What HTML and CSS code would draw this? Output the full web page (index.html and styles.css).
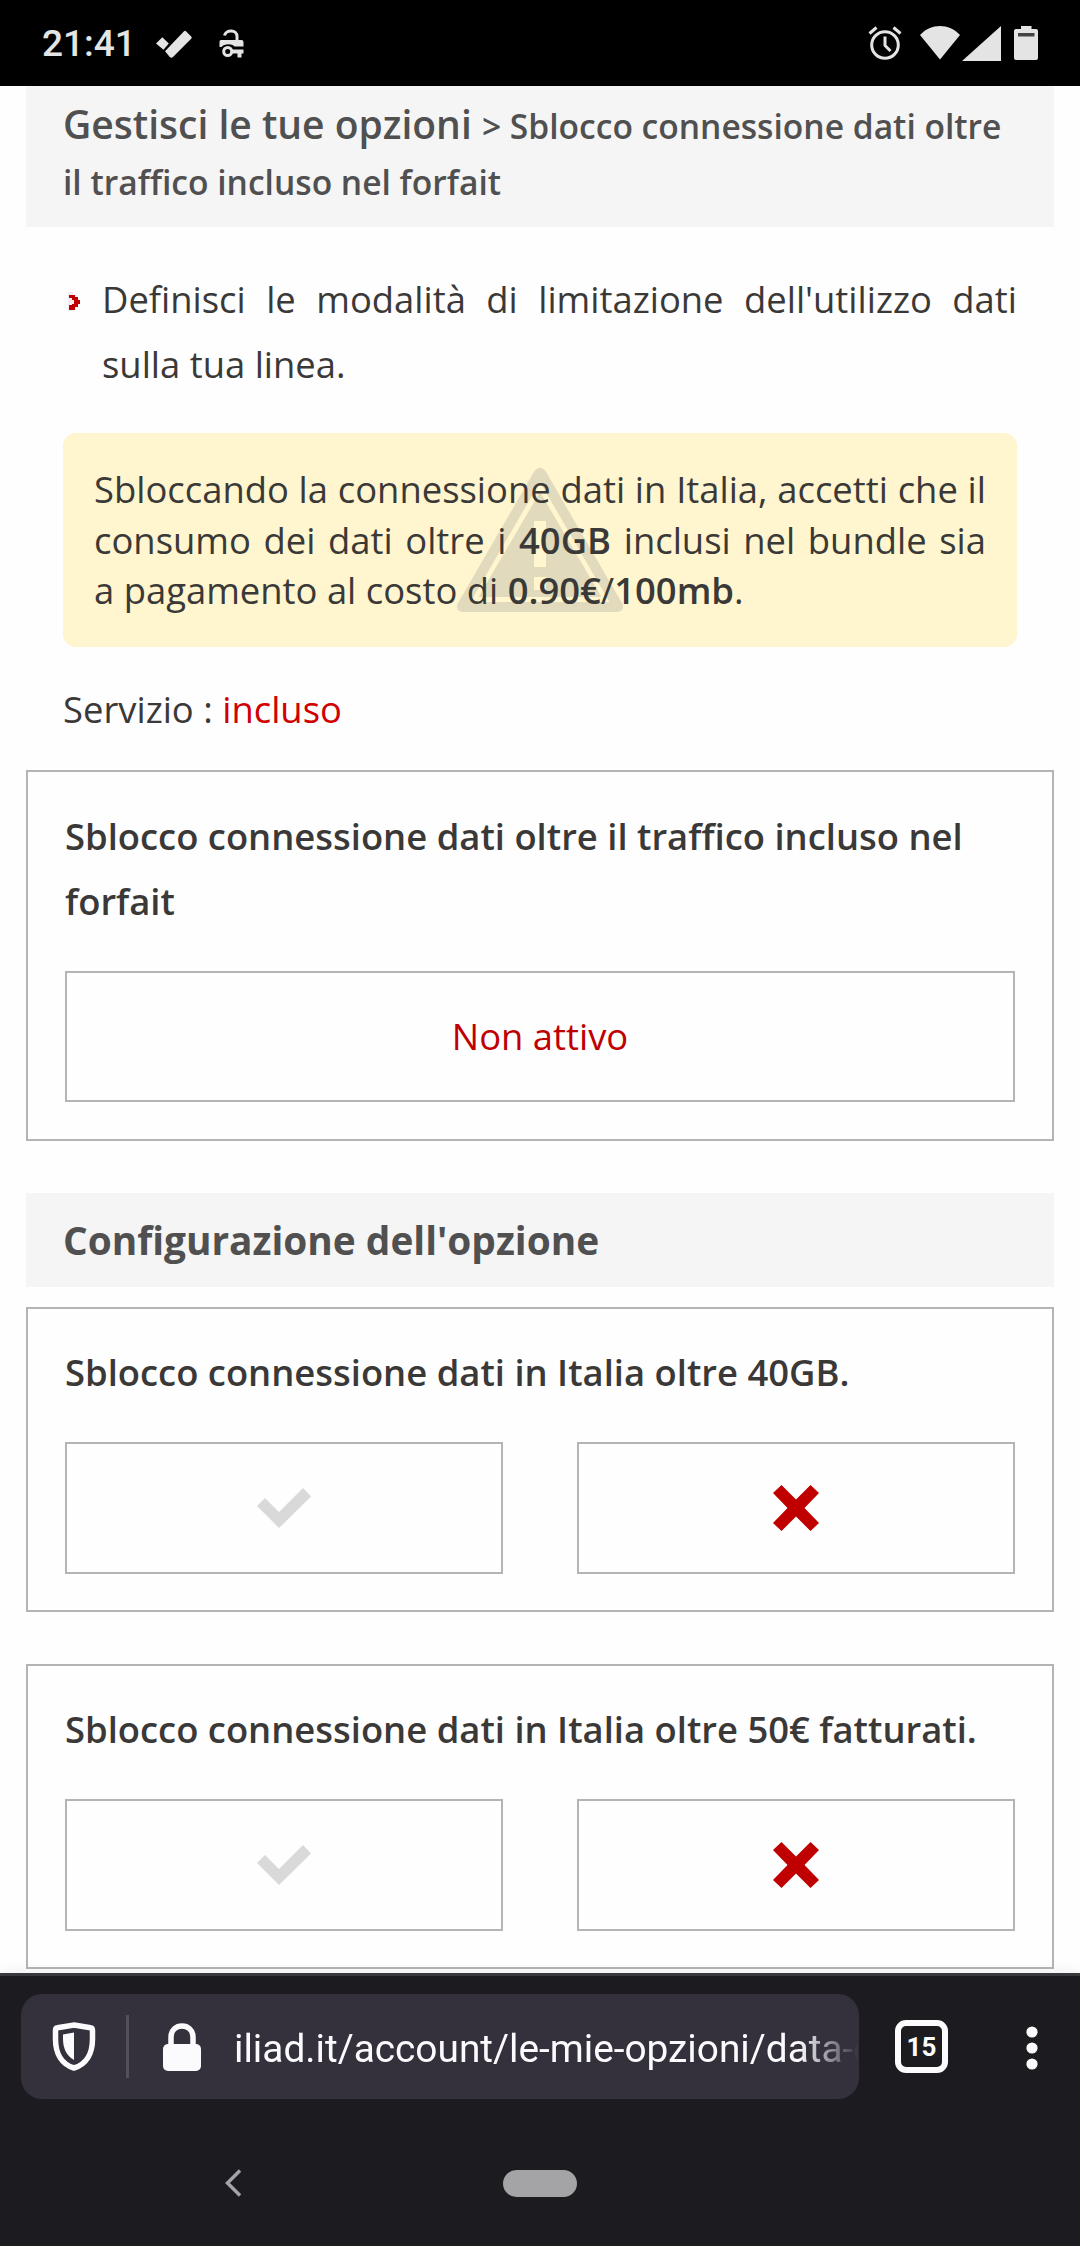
FILE: index.html
```html
<!DOCTYPE html>
<html lang="it">
<head>
    <meta charset="UTF-8">
    <meta name="viewport" content="width=device-width, initial-scale=1.0">
    <title>Gestisci le tue opzioni</title>
    <link rel="stylesheet" href="styles.css">
</head>
<body>
    <header class="status-bar">
        <span class="time">21:41</span>
        <svg class="task-icon" width="36" height="28" viewBox="0 0 36 28">
            <path d="M0 13.5 6.3 7.2 12.8 13.5 7.5 19.8zM9 21.3 28 1.2Q29 .2 30 1.2L35.2 6.4Q36.2 7.6 35.2 8.8L17 27Q15.4 28.4 13.8 27z"/>
        </svg>
        <svg class="vpn-icon" width="25" height="29" viewBox="0 0 25 29">
            <path class="line" d="M5.5 6.5C7 .2 18 .2 18 7.5V12"/>
            <path d="M2 11H22.5Q24.5 11 24.5 13V17.5H15.5C13 14.5 5 14.5 2.5 18H.5V13Q.5 11 2 11z"/>
            <circle class="line" cx="8.7" cy="22.5" r="4"/>
            <path d="M13 20.5H24.5V24.5H22.5V28.5H18.5V24.5H13z"/>
        </svg>
        <svg class="alarm-icon" width="34" height="36" viewBox="0 0 34 36">
            <circle class="line" cx="17" cy="20" r="13.3"/>
            <path class="line" d="M1.5 8.5 8.5 2.5M32.5 8.5 25.5 2.5M17 11.5V20.5L22.5 26"/>
        </svg>
        <svg class="wifi-icon" width="40" height="34" viewBox="0 0 40 34">
            <path d="M0 9C11-3 29-3 40 9L20 33.5z"/>
        </svg>
        <svg class="signal-icon" width="39" height="35" viewBox="0 0 39 35">
            <path d="M0 35 39 0V35z"/>
        </svg>
        <svg class="battery-icon" width="24" height="34" viewBox="0 0 24 34">
            <path d="M7 0H17.5V3H22Q24 3 24 5V32Q24 34 22 34H2Q0 34 0 32V5Q0 3 2 3H7z"/>
            <path class="level" d="M4 7H20.5V10.5H4z"/>
        </svg>
    </header>

    <main class="page">
        <h1 class="title breadcrumb">Gestisci le tue opzioni <small>&gt; Sblocco connessione dati oltre il traffico incluso nel forfait</small></h1>

        <div class="intro">
            <svg class="bullet" width="13" height="19" viewBox="0 0 13 19">
                <path class="halo" d="M0 0H5V3H8V6H11V13H8V16H5V19H0z"/>
                <path d="M1 3H7V5H10V8H12V12H10V15H7V18H1V13H4V12H6V8H4V6H1z"/>
            </svg>
            <p>Definisci le modalità di limitazione dell'utilizzo dati sulla tua linea.</p>
        </div>

        <div class="warning">
            <svg class="warning-icon" width="167" height="146" viewBox="0 0 167 146">
                <path fill-rule="evenodd" d="M78 4Q83.5-3 89 4L166 137Q168 144 161 145H6Q-1 144 1 137zM83.5 15 14 135H153z"/>
                <path fill-rule="evenodd" d="M83.5 25 145 130H22zM77.5 54V100H89.5V54zM77.5 110V123H89.5V110z"/>
            </svg>
            <p>Sbloccando la connessione dati in Italia, accetti che il consumo dei dati oltre i <b>40GB</b> inclusi nel bundle sia a pagamento al costo di <b>0.90€</b>/<b>100mb</b>.</p>
        </div>

        <p class="service">Servizio : <span class="included">incluso</span></p>

        <section class="card status">
            <h3>Sblocco connessione dati oltre il traffico incluso nel forfait</h3>
            <div class="buttons">
                <a class="button">Non attivo</a>
            </div>
        </section>

        <h2 class="title">Configurazione dell'opzione</h2>

        <section class="card">
            <h3>Sblocco connessione dati in Italia oltre 40GB.</h3>
            <div class="buttons">
                <a class="button">
                    <svg class="yes" width="54" height="40" viewBox="0 0 54 40"><path d="M0 18 8 10 22 24 46 0 54 8.5 22 40z"/></svg>
                </a>
                <a class="button">
                    <svg class="no" width="46" height="46" viewBox="0 0 46 46"><path d="M0 8 8.5 0 23 14.5 37.5 0 46 8 31.5 23 46 38 37.5 46 23 31.5 8.5 46 0 38 14.5 23z"/></svg>
                </a>
            </div>
        </section>

        <section class="card">
            <h3>Sblocco connessione dati in Italia oltre 50€ fatturati.</h3>
            <div class="buttons">
                <a class="button">
                    <svg class="yes" width="54" height="40" viewBox="0 0 54 40"><path d="M0 18 8 10 22 24 46 0 54 8.5 22 40z"/></svg>
                </a>
                <a class="button">
                    <svg class="no" width="46" height="46" viewBox="0 0 46 46"><path d="M0 8 8.5 0 23 14.5 37.5 0 46 8 31.5 23 46 38 37.5 46 23 31.5 8.5 46 0 38 14.5 23z"/></svg>
                </a>
            </div>
        </section>
    </main>

    <footer class="browser">
        <div class="toolbar">
            <div class="address">
                <svg class="shield-icon" width="44" height="49" viewBox="0 0 44 49">
                    <path class="line" d="M22 3 38.5 5.8Q40.5 6 40.5 8.5V17C40.5 32 34 42.5 22 46 10 42.5 3.5 32 3.5 17V8.5Q3.5 6 5.5 5.8z"/>
                    <path d="M22 10.5V38C14.5 34 11 26 11 17V12.5z"/>
                </svg>
                <span class="divider"></span>
                <svg class="lock-icon" width="38" height="49" viewBox="0 0 38 49">
                    <rect x="0" y="22" width="38" height="27" rx="5"/>
                    <path class="line" d="M8 23V15C8 .2 30 .2 30 15V23"/>
                </svg>
                <span class="url">iliad.it/account/le-mie-opzioni/data-c</span>
            </div>
            <span class="tabs">15</span>
            <svg class="menu-icon" width="12" height="44" viewBox="0 0 12 44">
                <circle cx="6" cy="6" r="5.6"/>
                <circle cx="6" cy="22" r="5.6"/>
                <circle cx="6" cy="38" r="5.6"/>
            </svg>
        </div>
        <nav class="navigation">
            <svg class="back-icon" width="17" height="28" viewBox="0 0 17 28">
                <path d="M15 1.5 2.5 14 15 26.5"/>
            </svg>
            <span class="home"></span>
        </nav>
    </footer>
</body>
</html>
```
FILE: styles.css
```css
* {
    box-sizing: border-box;
}

body {
    display: flex;
    flex-direction: column;
    height: 2246px;
    margin: 0;
    overflow: hidden;
    background-color: #fefefe;
    font-family: "Open Sans", "Noto Sans", sans-serif;
    font-size: 36.4px;
    line-height: 65px;
    color: #3a3938;
}

h1, h2, h3, p {
    margin: 0;
}

svg {
    flex: none;
    display: block;
}

.line {
    fill: none;
}

/* status bar */
.status-bar {
    display: flex;
    flex: none;
    align-items: center;
    height: 86px;
    padding: 0 42px;
    background-color: #000;
    color: #e4e4e4;
    fill: #e4e4e4;
    stroke-width: 3;
    font-family: Roboto, sans-serif;
}

.status-bar .line {
    stroke: #e4e4e4;
}

.time {
    width: 114px;
    padding-top: 1px;
    font-size: 37px;
    font-weight: 500;
    white-space: nowrap;
}

.task-icon {
    margin-top: 2px;
}

.vpn-icon {
    margin-left: 27px;
}

.alarm-icon {
    margin-left: auto;
}

.wifi-icon {
    margin-left: 18px;
}

.signal-icon {
    margin-left: 2px;
}

.battery-icon {
    margin-left: 13px;
}

.battery-icon .level {
    fill: #454545;
}

/* page */
.page {
    flex: 1;
    min-height: 0;
    padding: 0 26px;
    overflow: hidden;
}

.title {
    padding: 19px 37px;
    background-color: #f5f5f5;
    color: #505050;
    font-size: 38.8px;
    font-weight: 700;
    line-height: 56px;
}

.breadcrumb {
    height: 141px;
    padding-top: 11px;
    font-size: 39px;
    font-weight: 600;
    line-height: 54px;
}

.breadcrumb small {
    font-size: 33.6px;
}

.intro {
    display: flex;
    align-items: flex-start;
    margin: 40px 37px 36px;
    text-align: justify;
}

.bullet {
    margin: 25px 21px 0 5px;
    fill: #c00000;
}

.bullet .halo {
    fill: #f5eded;
}

.warning {
    position: relative;
    height: 214px;
    margin: 0 37px;
    padding: 31px;
    border-radius: 13px;
    background-color: #fff5ce;
    line-height: 50.7px;
    text-align: justify;
}

.warning p {
    position: relative;
}

.warning b {
    font-weight: 600;
}

.warning-icon {
    position: absolute;
    top: 34px;
    left: 50%;
    transform: translateX(-50%);
    fill: #e1dabc;
}

.service {
    margin: 30px 37px 28px;
}

.included {
    color: #d00000;
}

.card {
    margin-bottom: 52px;
    padding: 31px 37px 36px;
    border: 2px solid #b4b4b4;
}

.card h3 {
    font-size: 36.4px;
    font-weight: 600;
}

.title + .card {
    margin-top: 20px;
}

.buttons {
    display: flex;
    gap: 74px;
    margin-top: 37px;
}

.button {
    display: flex;
    flex: 1;
    align-items: center;
    justify-content: center;
    height: 132px;
    border: 2px solid #b4b4b4;
    color: #c00000;
}

.status {
    padding: 32px 37px 37px;
}

.status .button {
    height: 131px;
}

.yes {
    fill: #d9d9d9;
}

.no {
    fill: #c00000;
}

/* browser toolbar */
.browser {
    flex: none;
    height: 273px;
    padding-top: 18px;
    border-top: 3px solid #38373c;
    background-color: #1c1b20;
    box-shadow: 0 0 14px rgba(0, 0, 0, 0.08);
    color: #fbfbfe;
    fill: #fbfbfe;
    font-family: Roboto, sans-serif;
}

.toolbar {
    display: flex;
    align-items: center;
    height: 105px;
    padding: 0 42px 0 21px;
}

.browser .line {
    stroke: #fbfbfe;
    stroke-width: 5.5;
}

.address {
    display: flex;
    align-items: center;
    width: 838px;
    height: 105px;
    padding-left: 31px;
    border-radius: 21px;
    background-color: #34313c;
    overflow: hidden;
}

.divider {
    flex: none;
    width: 3px;
    height: 63px;
    margin: 0 34px 0 30px;
    background-color: #53505c;
}

.url {
    flex: 1;
    margin-left: 33px;
    padding-top: 4px;
    overflow: hidden;
    font-size: 38.8px;
    white-space: nowrap;
    -webkit-mask-image: linear-gradient(to left, transparent, #000 60px);
    mask-image: linear-gradient(to left, transparent, #000 60px);
}

.tabs {
    width: 53px;
    height: 53px;
    margin-left: 36px;
    border: 6px solid #fbfbfe;
    border-radius: 11px;
    font-size: 26px;
    font-weight: 700;
    line-height: 43px;
    text-align: center;
}

.menu-icon {
    margin-top: 2px;
    margin-left: auto;
}

.navigation {
    display: flex;
    align-items: center;
    height: 147px;
    padding: 21px 0 0 225px;
}

.back-icon {
    fill: none;
    stroke: #a4a4a6;
    stroke-width: 3.5;
}

.home {
    width: 74px;
    height: 27px;
    margin-left: 261px;
    border-radius: 14px;
    background-color: #a4a4a6;
}
```
